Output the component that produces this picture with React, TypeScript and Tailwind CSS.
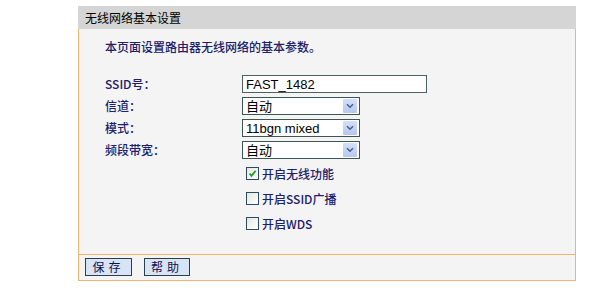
import React from "react";

const cjk = { fontFamily: '"Noto Sans CJK SC", "Noto Sans", sans-serif' };

function Select({ value }: { value: string }) {
  return (
    <div className="flex h-[18px] w-[118px] items-stretch border border-[#3c5656] bg-white">
      <div className="flex flex-1 items-center pl-[3px] text-[13px] leading-none text-black" style={{ fontFamily: '"Liberation Sans", "Noto Sans CJK SC", sans-serif' }}>
        {value}
      </div>
      <div className="my-[1px] mr-[2px] flex w-[14px] items-center justify-center rounded-[1px] bg-gradient-to-b from-[#d4e0fa] to-[#b4c8f0]">
        <svg width="8" height="6" viewBox="0 0 8 6">
          <path d="M1 1.2 L4 4.2 L7 1.2" fill="none" stroke="#4d6185" strokeWidth="1.6" />
        </svg>
      </div>
    </div>
  );
}

function Check({ checked, label }: { checked?: boolean; label: string }) {
  return (
    <div className="flex h-[25px] items-center pl-[4px]">
      <div className="flex h-[13px] w-[13px] items-center justify-center border border-[#2a4a66] bg-gradient-to-br from-[#e6e6e0] to-white">
        {checked && (
          <svg width="9" height="9" viewBox="0 0 9 9">
            <path d="M1.5 4.5 L3.5 6.8 L7.6 1.8" fill="none" stroke="#21a121" strokeWidth="1.8" />
          </svg>
        )}
      </div>
      <span className="ml-[3px] text-[12px] font-medium leading-none text-[#20206a]" style={cjk}>
        {label}
      </span>
    </div>
  );
}

export default function App() {
  const labels = ["SSID号：", "信道：", "模式：", "频段带宽："];
  return (
    <div className="h-[288px] w-[600px] bg-white pt-[6px]" style={cjk}>
      <div className="ml-[78px] w-[498px]">
        <div className="flex h-[23px] items-center bg-[#d5d5d5] pl-[7px] text-[12px] text-black">
          无线网络基本设置
        </div>
        <div className="border-x border-b border-[#f0b46e] bg-[#f4f4f4] pb-[18px] pt-[10px]">
          <div className="pl-[26px] text-[12px] font-medium leading-[16px] text-[#20206a]">
            本页面设置路由器无线网络的基本参数。
          </div>
          <div className="mt-[18px] flex">
            <div className="w-[163px] pl-[26px]">
              {labels.map((l) => (
                <div key={l} className="flex h-[22px] items-center text-[12px] font-medium leading-none text-[#20206a]">
                  {l}
                </div>
              ))}
            </div>
            <div className="flex flex-col">
              <div className="flex h-[22px] items-center">
                <div
                  className="flex h-[18px] w-[185px] items-center border border-[#4a6464] bg-white pl-[3px] text-[13px] leading-none text-black"
                  style={{ fontFamily: '"Liberation Sans", sans-serif' }}
                >
                  FAST_1482
                </div>
              </div>
              <div className="flex h-[22px] items-center">
                <Select value="自动" />
              </div>
              <div className="flex h-[22px] items-center">
                <Select value="11bgn mixed" />
              </div>
              <div className="flex h-[22px] items-center">
                <Select value="自动" />
              </div>
              <Check checked label="开启无线功能" />
              <Check label="开启SSID广播" />
              <Check label="开启WDS" />
            </div>
          </div>
        </div>
        <div className="flex h-[26px] gap-[12px] border-x border-b border-[#f0b46e] bg-[#f4f4f4] pl-[6px] pt-[3px]">
          <button className="h-[18px] w-[47px] border border-[#2e3e4e] bg-[#d6e4f6] text-[12px] leading-none tracking-[4px] text-[#10104a]">
            保存
          </button>
          <button className="h-[18px] w-[46px] border border-[#2e3e4e] bg-[#d6e4f6] text-[12px] leading-none tracking-[4px] text-[#10104a]">
            帮助
          </button>
        </div>
      </div>
    </div>
  );
}
